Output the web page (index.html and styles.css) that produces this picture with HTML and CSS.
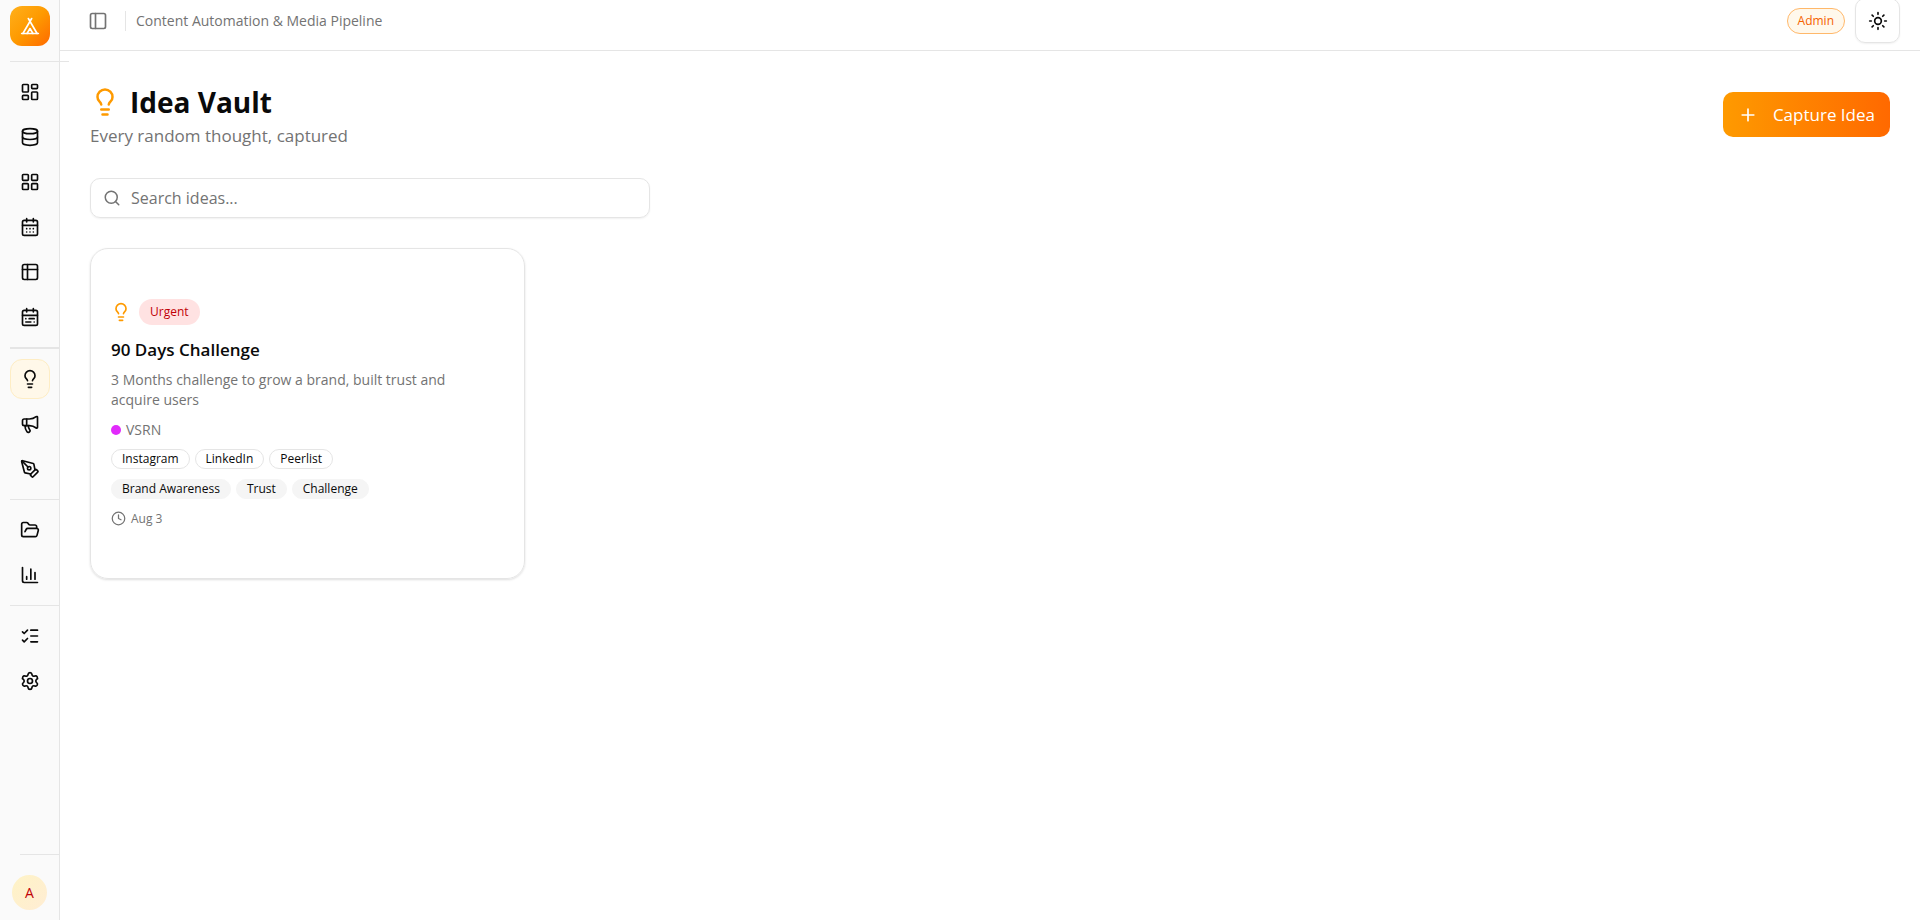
FILE: index.html
```
<!DOCTYPE html>
<html lang="en">
<head>
<meta charset="utf-8">
<meta name="viewport" content="width=device-width, initial-scale=1">
<title>Idea Vault</title>
<link rel="stylesheet" href="styles.css">
</head>
<body>
<div class="app">
  <aside class="sidebar">
    <a class="logo" href="#" aria-label="Home">
      <svg class="icon" viewBox="0 0 24 24"><path d="M3.5 21 14 3"/><path d="M20.500 21 10 3"/><path d="M15.500 21 12 15l-3.500 6"/><path d="M2 21h20"/></svg>
    </a>
    <nav class="nav" aria-label="Main">
      <div class="group group-first">
        <a class="item" href="#" aria-label="Dashboard"><svg class="icon" viewBox="0 0 24 24"><rect width="7" height="9" x="3" y="3" rx="1"/><rect width="7" height="5" x="14" y="3" rx="1"/><rect width="7" height="9" x="14" y="12" rx="1"/><rect width="7" height="5" x="3" y="16" rx="1"/></svg></a>
        <a class="item" href="#" aria-label="Database"><svg class="icon" viewBox="0 0 24 24"><ellipse cx="12" cy="5" rx="9" ry="3"/><path d="M3 5v14a9 3 0 0 0 18 0V5"/><path d="M3 12a9 3 0 0 0 18 0"/></svg></a>
        <a class="item" href="#" aria-label="Board"><svg class="icon" viewBox="0 0 24 24"><rect width="7" height="7" x="3" y="3" rx="1"/><rect width="7" height="7" x="14" y="3" rx="1"/><rect width="7" height="7" x="14" y="14" rx="1"/><rect width="7" height="7" x="3" y="14" rx="1"/></svg></a>
        <a class="item" href="#" aria-label="Calendar"><svg class="icon" viewBox="0 0 24 24"><path d="M8 2v4M16 2v4"/><rect width="18" height="18" x="3" y="4" rx="2"/><path d="M3 10h18M8 14h.01M12 14h.01M16 14h.01M8 18h.01M12 18h.01M16 18h.01"/></svg></a>
        <a class="item" href="#" aria-label="Table"><svg class="icon" viewBox="0 0 24 24"><rect width="18" height="18" x="3" y="3" rx="2"/><path d="M3 9h18M9 3v18"/></svg></a>
        <a class="item" href="#" aria-label="Schedule"><svg class="icon" viewBox="0 0 24 24"><rect width="18" height="18" x="3" y="4" rx="2"/><path d="M16 2v4M3 10h18M8 2v4M17 14h-6M13 18H7M7 14h.01M17 18h.01"/></svg></a>
      </div>
      <div class="group group-strong">
        <a class="item item-active" href="#" aria-label="Idea Vault" aria-current="page"><svg class="icon" viewBox="0 0 24 24"><path d="M15 14c.2-1 .7-1.700 1.500-2.500 1-.9 1.500-2.200 1.500-3.500A6 6 0 0 0 6 8c0 1 .2 2.200 1.500 3.500.7.7 1.300 1.500 1.500 2.500"/><path d="M9 18h6M10 22h4"/></svg></a>
        <a class="item" href="#" aria-label="Campaigns"><svg class="icon" viewBox="0 0 24 24"><path d="M11 6a13 13 0 0 0 8.400-2.800A1 1 0 0 1 21 4v12a1 1 0 0 1-1.600.8A13 13 0 0 0 11 14H5a2 2 0 0 1-2-2V8a2 2 0 0 1 2-2z"/><path d="M6 14a12 12 0 0 0 2.400 7.200 2 2 0 0 0 3.200-2.400A8 8 0 0 1 10 14"/><path d="M8 6v8"/></svg></a>
        <a class="item" href="#" aria-label="Writing"><svg class="icon" viewBox="0 0 24 24"><path d="M15.707 21.293a1 1 0 0 1-1.414 0l-1.586-1.586a1 1 0 0 1 0-1.414l5.586-5.586a1 1 0 0 1 1.414 0l1.586 1.586a1 1 0 0 1 0 1.414z"/><path d="m18 13-1.375-6.874a1 1 0 0 0-.746-.776L3.235 2.028a1 1 0 0 0-1.207 1.207L5.350 15.879a1 1 0 0 0 .776.746L13 18"/><path d="m2.300 2.300 7.286 7.286"/><circle cx="11" cy="11" r="2"/></svg></a>
      </div>
      <div class="group">
        <a class="item" href="#" aria-label="Files"><svg class="icon" viewBox="0 0 24 24"><path d="m6 14 1.500-2.900A2 2 0 0 1 9.240 10H20a2 2 0 0 1 1.940 2.500l-1.540 6a2 2 0 0 1-1.950 1.500H4a2 2 0 0 1-2-2V5a2 2 0 0 1 2-2h3.900a2 2 0 0 1 1.690.9l.81 1.200a2 2 0 0 0 1.670.9H18a2 2 0 0 1 2 2v2"/></svg></a>
        <a class="item" href="#" aria-label="Analytics"><svg class="icon" viewBox="0 0 24 24"><path d="M3 3v16a2 2 0 0 0 2 2h16M18 17V9M13 17V5M8 17v-3"/></svg></a>
      </div>
      <div class="group">
        <a class="item" href="#" aria-label="Tasks"><svg class="icon" viewBox="0 0 24 24"><path d="M13 5h8M13 12h8M13 19h8M3 17l2 2 4-4M3 7l2 2 4-4"/></svg></a>
        <a class="item" href="#" aria-label="Settings"><svg class="icon" viewBox="0 0 24 24"><path d="M9.671 4.136a2.340 2.340 0 0 1 4.659 0 2.340 2.340 0 0 0 3.319 1.915 2.340 2.340 0 0 1 2.330 4.033 2.340 2.340 0 0 0 0 3.831 2.340 2.340 0 0 1-2.330 4.033 2.340 2.340 0 0 0-3.319 1.915 2.340 2.340 0 0 1-4.659 0 2.340 2.340 0 0 0-3.320-1.915 2.340 2.340 0 0 1-2.330-4.033 2.340 2.340 0 0 0 0-3.831A2.340 2.340 0 0 1 6.350 6.051a2.340 2.340 0 0 0 3.319-1.915"/><circle cx="12" cy="12" r="3"/></svg></a>
      </div>
    </nav>
    <div class="account"><button class="avatar" type="button" aria-label="Account">A</button></div>
  </aside>
  <div class="content">
    <header class="topbar">
      <button class="toggle" type="button" aria-label="Toggle sidebar"><svg class="icon" viewBox="0 0 24 24"><rect width="18" height="18" x="3" y="3" rx="2"/><path d="M9 3v18"/></svg></button>
      <span class="divider"></span>
      <span class="crumb">Content Automation &amp; Media Pipeline</span>
      <span class="role">Admin</span>
      <button class="theme" type="button" aria-label="Change theme"><svg class="icon" viewBox="0 0 24 24"><circle cx="12" cy="12" r="4"/><path d="M12 2v2M12 20v2M4.930 4.930l1.410 1.410M17.660 17.660l1.410 1.410M2 12h2M20 12h2M6.340 17.660l-1.410 1.410M19.070 4.930l-1.410 1.410"/></svg></button>
    </header>
    <main class="page">
      <div class="page-head">
        <div>
          <h1 class="title"><svg class="icon icon-xl" viewBox="0 0 24 24"><path d="M15 14c.2-1 .7-1.700 1.500-2.500 1-.9 1.500-2.200 1.500-3.500A6 6 0 0 0 6 8c0 1 .2 2.200 1.500 3.500.7.7 1.300 1.500 1.500 2.500"/><path d="M9 18h6M10 22h4"/></svg>Idea Vault</h1>
          <p class="subtitle">Every random thought, captured</p>
        </div>
        <button class="capture" type="button"><svg class="icon" viewBox="0 0 24 24"><path d="M5 12h14M12 5v14"/></svg>Capture Idea</button>
      </div>
      <label class="search">
        <svg class="icon icon-search" viewBox="0 0 24 24"><path d="m21 21-4.340-4.340"/><circle cx="11" cy="11" r="8"/></svg>
        <input class="search-input" type="text" placeholder="Search ideas..." aria-label="Search ideas">
      </label>
      <section class="grid">
        <article class="card">
          <div class="card-top">
            <svg class="icon icon-idea" viewBox="0 0 24 24"><path d="M15 14c.2-1 .7-1.700 1.500-2.500 1-.9 1.500-2.200 1.500-3.500A6 6 0 0 0 6 8c0 1 .2 2.200 1.500 3.500.7.7 1.300 1.500 1.500 2.500"/><path d="M9 18h6M10 22h4"/></svg>
            <span class="urgent">Urgent</span>
          </div>
          <div class="card-body">
            <h2 class="card-title">90 Days Challenge</h2>
            <p class="card-text">3 Months challenge to grow a brand, built trust and acquire users</p>
          </div>
          <div class="brand"><span class="dot"></span>VSRN</div>
          <div class="chips">
            <span class="chip">Instagram</span><span class="chip">LinkedIn</span><span class="chip">Peerlist</span>
          </div>
          <div class="chips">
            <span class="chip chip-soft">Brand Awareness</span><span class="chip chip-soft">Trust</span><span class="chip chip-soft">Challenge</span>
          </div>
          <div class="date"><svg class="icon icon-sm" viewBox="0 0 24 24"><circle cx="12" cy="12" r="10"/><path d="M12 6v6l4 2"/></svg>Aug 3</div>
        </article>
      </section>
    </main>
  </div>
</div>
</body>
</html>
```
FILE: styles.css
```
* { box-sizing: border-box; }

body {
  margin: 0;
  background: #fff;
  color: #0a0a0a;
  font-family: "Segoe UI", "Open Sans", "Noto Sans", sans-serif;
  font-size: 16px;
  line-height: 20px;
}

h1, h2, p { margin: 0; }

button, input { font: inherit; color: inherit; }

button { padding: 0; border: 0; background: none; cursor: pointer; }

.icon {
  display: block;
  flex: none;
  width: 20px;
  height: 20px;
  fill: none;
  stroke: currentColor;
  stroke-width: 2;
  stroke-linecap: round;
  stroke-linejoin: round;
}

.icon-xl { width: 30px; height: 30px; color: #fe9a00; }
.icon-idea { width: 20px; height: 20px; color: #fe9a00; }
.icon-sm { width: 15px; height: 15px; }

.app { display: flex; min-height: 100vh; }

/* Sidebar */
.sidebar {
  display: flex;
  flex: none;
  flex-direction: column;
  width: 60px;
  padding-top: 6px;
  background: #fafafa;
  border-right: 1px solid #e5e5e5;
}

.logo {
  display: grid;
  place-items: center;
  width: 40px;
  height: 40px;
  margin: 0 0 15px 10px;
  border-radius: 12px;
  background: linear-gradient(135deg, #ffb01c, #fe9a00 50%, #ff6900);
  color: #fff;
}

.nav { padding-left: 10px; }

.group {
  display: flex;
  flex-direction: column;
  gap: 5px;
  padding: 10px 0;
  border-top: 1px solid #e5e5e5;
}

.group-first { width: 59px; }
.group-strong { border-top-width: 2px; }

.item {
  display: grid;
  place-items: center;
  width: 40px;
  height: 40px;
  border-radius: 12px;
  color: #0a0a0a;
}

.item-active {
  background: #fff8e9;
  border: 1px solid #feedc4;
}

.account {
  margin: auto 0 0 20px;
  padding: 20px 0 10px;
  border-top: 1px solid #e5e5e5;
}

.avatar {
  display: block;
  width: 35px;
  height: 35px;
  margin-left: -8px;
  border-radius: 50%;
  background: linear-gradient(135deg, #fef3c6, #ffedd4);
  color: #c10007;
  font-size: 14px;
  font-weight: 400;
}

/* Top bar */
.content { flex: 1; min-width: 0; }

.topbar {
  display: flex;
  align-items: center;
  height: 51px;
  padding: 0 20px 9px 28px;
  border-bottom: 1px solid #e5e5e5;
}

.toggle, .crumb { color: #737373; }

.divider {
  width: 1px;
  height: 20px;
  margin: 0 10px 0 17px;
  background: #e5e5e5;
}

.crumb { font-size: 14px; }

.role {
  margin: 0 10px 0 auto;
  padding: 2px 10px;
  border: 1px solid #ffb86a;
  border-radius: 13px;
  background: #fff8ec;
  color: #f56200;
  font-size: 12px;
  font-weight: 500;
}

.theme {
  display: grid;
  flex: none;
  place-items: center;
  width: 45px;
  height: 45px;
  border: 1px solid #e5e5e5;
  border-radius: 10px;
  box-shadow: 0 1px 2px rgb(0 0 0 / 6%);
}

/* Page */
.page { padding: 30px; }

.page-head {
  display: flex;
  align-items: center;
  justify-content: space-between;
  margin-bottom: 30px;
}

.title {
  display: flex;
  align-items: center;
  gap: 10px;
  font-size: 28px;
  line-height: 42px;
  font-weight: 700;
}

.subtitle {
  color: #737373;
  font-size: 17px;
  line-height: 25px;
}

.capture {
  display: flex;
  align-items: center;
  gap: 15px;
  height: 45px;
  padding: 0 15px;
  border-radius: 10px;
  background: linear-gradient(90deg, #fe9a00, #ff6900);
  color: #fff;
  font-size: 17px;
  font-weight: 500;
}

.search {
  display: flex;
  align-items: center;
  gap: 10px;
  width: 100%;
  max-width: 560px;
  height: 40px;
  margin-bottom: 30px;
  padding: 0 12px;
  border: 1px solid #e5e5e5;
  border-radius: 10px;
  box-shadow: 0 1px 2px rgb(0 0 0 / 6%);
}

.icon-search { width: 18px; height: 18px; color: #737373; }

.search-input {
  flex: 1;
  min-width: 0;
  padding: 0;
  border: 0;
  outline: 0;
  background: none;
  font-size: 16px;
}

.search-input::placeholder { color: #737373; opacity: 1; }

/* Cards */
.grid {
  display: grid;
  grid-template-columns: repeat(4, minmax(0, 1fr));
  gap: 20px;
}

.card {
  display: flex;
  flex-direction: column;
  gap: 10px;
  padding: 50px 20px;
  border: 1px solid #e5e5e5;
  border-radius: 18px;
  box-shadow: 0 1px 3px rgb(0 0 0 / 8%), 0 1px 2px rgb(0 0 0 / 6%);
}

.card-top { display: flex; align-items: center; gap: 8px; }

.urgent {
  padding: 3px 11px;
  border-radius: 13px;
  background: #ffe2e2;
  color: #c10007;
  font-size: 12px;
  font-weight: 500;
}

.card-body { display: flex; flex-direction: column; gap: 5px; }

.card-title { font-size: 17px; line-height: 30px; font-weight: 600; }

.card-text { padding-right: 20px; color: #737373; font-size: 14px; }

.brand, .date {
  display: flex;
  align-items: center;
  gap: 5px;
  color: #737373;
  line-height: 19px;
}

.brand { font-size: 14px; }
.date { font-size: 12px; }

.dot { width: 10px; height: 10px; border-radius: 50%; background: #e12afb; }

.chips { display: flex; flex-wrap: wrap; gap: 5px; }

.chip {
  padding: 0 10px;
  border: 1px solid #e5e5e5;
  border-radius: 10px;
  font-size: 12px;
  line-height: 18px;
  font-weight: 500;
}

.chip-soft { border-color: #f5f5f5; background: #f5f5f5; }
```
